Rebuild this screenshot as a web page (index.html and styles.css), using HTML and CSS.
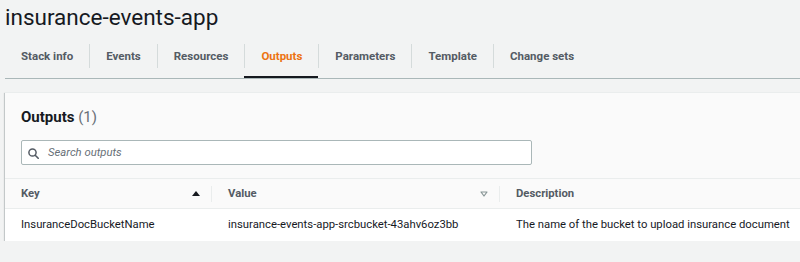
FILE: index.html
```html
<!DOCTYPE html>
<html>
<head>
<meta charset="utf-8">
<link rel="stylesheet" href="styles.css">
</head>
<body>
<div class="page">
  <h1 class="title">insurance-events-app</h1>
  <ul class="tabs">
    <li class="tab"><span class="tab-label">Stack info</span></li>
    <li class="tab"><span class="tab-label sep">Events</span></li>
    <li class="tab"><span class="tab-label sep">Resources</span></li>
    <li class="tab active"><span class="tab-label sep">Outputs</span></li>
    <li class="tab"><span class="tab-label sep">Parameters</span></li>
    <li class="tab"><span class="tab-label sep">Template</span></li>
    <li class="tab"><span class="tab-label sep">Change sets</span></li>
  </ul>
  <section class="card">
    <div class="card-header">
      <h2 class="card-title">Outputs <span class="count">(1)</span></h2>
      <div class="search">
        <svg class="search-icon" width="11" height="11" viewBox="0 0 11 11"><circle cx="4.5" cy="4.5" r="3.6" fill="none" stroke="#545b64" stroke-width="1.5"/><line x1="7.2" y1="7.2" x2="10.2" y2="10.2" stroke="#545b64" stroke-width="1.6" stroke-linecap="round"/></svg>
        <span class="placeholder">Search outputs</span>
      </div>
    </div>
    <div class="table">
      <div class="th"><span class="th-label">Key</span><svg class="sort" width="8" height="5" viewBox="0 0 8 5"><polygon points="0,5 4,0 8,5" fill="#16191f"/></svg><span class="divider"></span></div>
      <div class="th"><span class="th-label">Value</span><svg class="sort" width="8" height="6" viewBox="0 0 8 6"><polygon points="1,1 7,1 4,5" fill="none" stroke="#879596" stroke-width="1.2" stroke-linejoin="round"/></svg><span class="divider"></span></div>
      <div class="th"><span class="th-label">Description</span></div>
      <div class="td">InsuranceDocBucketName</div>
      <div class="td">insurance-events-app-srcbucket-43ahv6oz3bb</div>
      <div class="td">The name of the bucket to upload insurance document</div>
    </div>
  </section>
</div>
</body>
</html>
```
FILE: styles.css
```css
html, body {
  margin: 0;
  padding: 0;
  background: #f2f3f3;
  overflow: hidden;
}
body {
  font-family: Roboto, "Liberation Sans", sans-serif;
  font-size: 11.3px;
  color: #16191f;
}
.page {
  padding-left: 5px;
}
.title {
  margin: 0;
  padding-top: 3px;
  font-size: 22.5px;
  font-weight: 400;
  line-height: 28px;
  color: #16191f;
}
.tabs {
  list-style: none;
  margin: 13px 0 0 0;
  padding: 0;
  display: flex;
  border-bottom: 1px solid #aab7b8;
}
.tab {
  padding-bottom: 8px;
  border-bottom: 2px solid transparent;
}
.tab.active {
  border-bottom-color: #16191f;
}
.tab-label {
  display: block;
  padding: 0 16px;
  line-height: 24px;
  font-weight: 700;
  font-size: 11.5px;
  color: #545b64;
}
.tab-label.sep {
  border-left: 1px solid #d5dbdb;
}
.tab.active .tab-label {
  color: #ec7211;
}
.card {
  margin: 13px -20px 0 0;
  background: #fafafa;
  border-top: 1px solid #eaeded;
  box-shadow: 0 1px 1px 0 rgba(0, 28, 36, 0.3), 1px 1px 1px 0 rgba(0, 28, 36, 0.15), -1px 1px 1px 0 rgba(0, 28, 36, 0.15);
}
.card-header {
  padding: 14px 16px 13px;
}
.card-title {
  margin: 0;
  font-size: 15px;
  font-weight: 700;
  line-height: 20px;
}
.count {
  font-weight: 400;
  color: #687078;
}
.search {
  margin-top: 13px;
  width: 511px;
  height: 25px;
  box-sizing: border-box;
  border: 1px solid #aab7b8;
  border-radius: 2px;
  background: #fff;
  display: flex;
  align-items: center;
  padding-left: 6px;
}
.search-icon {
  display: block;
  margin-top: 1px;
}
.placeholder {
  margin-left: 9px;
  font-style: italic;
  color: #687078;
}
.table {
  display: grid;
  grid-template-columns: 207px 288px 1fr;
  border-top: 1px solid #eaeded;
}
.th {
  display: flex;
  align-items: center;
  height: 29px;
  padding-left: 16px;
  border-bottom: 1px solid #eaeded;
  font-weight: 700;
  color: #545b64;
}
.th-label {
  flex: 1;
}
.sort {
  display: block;
}
.divider {
  width: 1px;
  height: 16px;
  margin-left: 11px;
  background: #eaeded;
}
.td {
  height: 32px;
  line-height: 32px;
  padding-left: 16px;
  background: #fff;
  white-space: nowrap;
}
```
